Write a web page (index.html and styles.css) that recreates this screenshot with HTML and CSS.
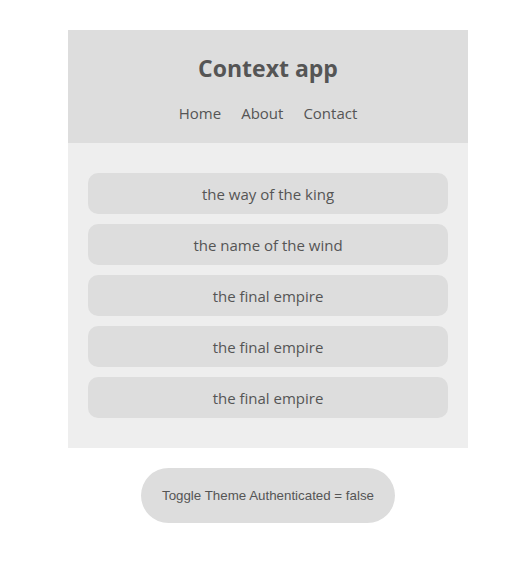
FILE: index.html
```html
<!DOCTYPE html>
<html>
<head>
<meta charset="utf-8">
<link rel="stylesheet" href="styles.css">
</head>
<body>
<div class="page">
  <div class="app">
    <header class="header">
      <h1 class="title">Context app</h1>
      <nav class="nav">
        <span class="nav-item">Home</span>
        <span class="nav-item">About</span>
        <span class="nav-item">Contact</span>
      </nav>
    </header>
    <ul class="books">
      <li class="book">the way of the king</li>
      <li class="book">the name of the wind</li>
      <li class="book">the final empire</li>
      <li class="book">the final empire</li>
      <li class="book">the final empire</li>
    </ul>
  </div>
  <button class="toggle">Toggle Theme Authenticated = false</button>
</div>
</body>
</html>
```
FILE: styles.css
```css
html, body {
  margin: 0;
  padding: 0;
  background: #fff;
}
.page {
  display: flex;
  flex-direction: column;
  align-items: center;
  padding: 30px 0 0 7px;
  font-family: "Open Sans", "Noto Sans", sans-serif;
  color: #555;
}
.app {
  width: 400px;
}
.header {
  background: #ddd;
  height: 113px;
  box-sizing: border-box;
  padding-top: 22px;
  text-align: center;
}
.title {
  margin: 0;
  font-size: 23px;
  font-weight: 700;
  line-height: 32px;
}
.nav {
  display: flex;
  justify-content: center;
  gap: 20px;
  margin-top: 18px;
  font-size: 15px;
  line-height: 22px;
}
.books {
  list-style: none;
  margin: 0;
  padding: 30px 20px;
  background: #eee;
  display: flex;
  flex-direction: column;
  gap: 10px;
}
.book {
  background: #ddd;
  border-radius: 10px;
  height: 41px;
  display: flex;
  align-items: center;
  justify-content: center;
  font-size: 15px;
}
.toggle {
  margin-top: 20px;
  width: 254px;
  height: 55px;
  border: none;
  border-radius: 28px;
  background: #ddd;
  color: #555;
  font-family: "Liberation Sans", Arial, sans-serif;
  font-size: 13.33px;
  padding: 0;
}
```
